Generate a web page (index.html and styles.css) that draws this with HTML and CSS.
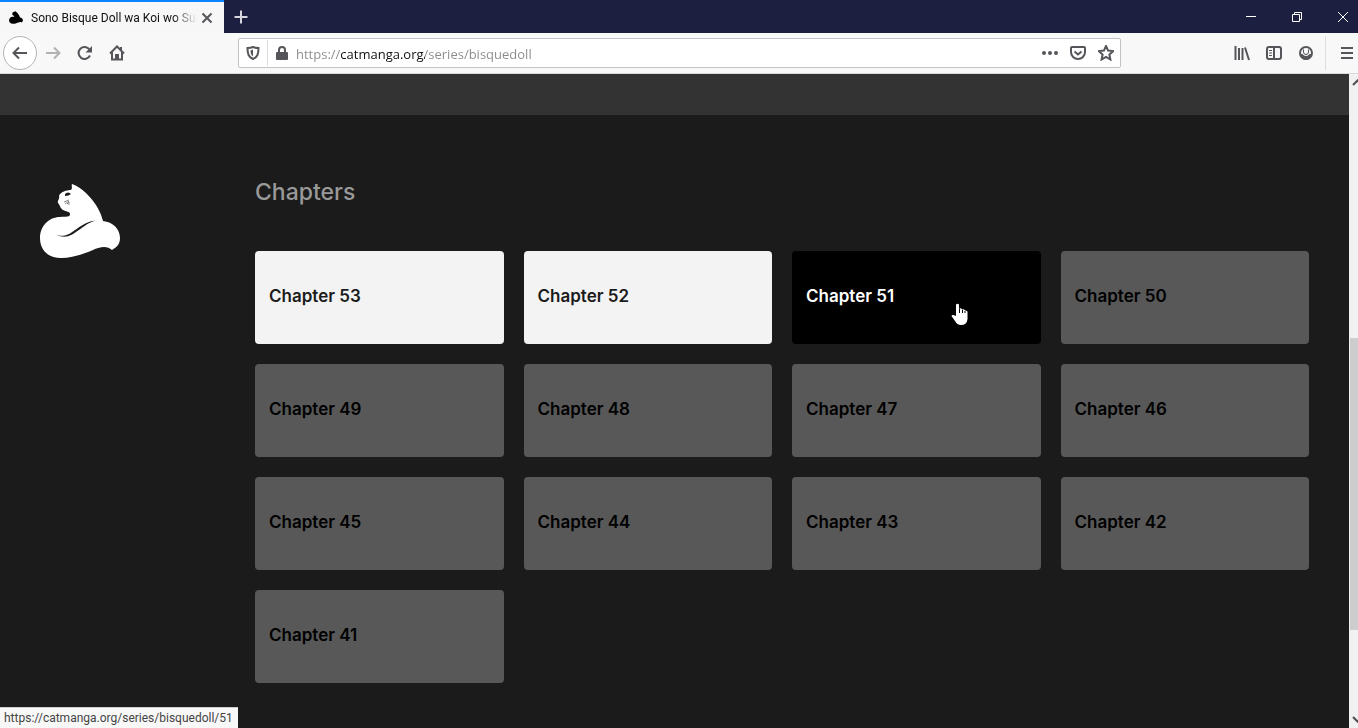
FILE: index.html
```html
<!DOCTYPE html>
<html lang="en">
<head>
<meta charset="utf-8">
<title>Sono Bisque Doll wa Koi wo Suru</title>
<link rel="stylesheet" href="styles.css">
</head>
<body>
<svg class="symbols" aria-hidden="true">
  <symbol id="cat" viewBox="0 0 80 75"><path d="M32 0C42 3 59 19 63 37C73 38 80 45 80 54C80 60 77 63 72 66C67 61 59 63 53 66C43 70 33 74 21 74C8 74 0 66 0 54C0 42 9 33 20 33C25 32 30 34 30 30C30 27 26 28 23 26C20 24 20 21 18 19C17 17 20 15 19 12C20 8 27 6 31 6C33 4 31 2 32 0Z"/></symbol>
</svg>
<div class="browser">
  <header class="titlebar">
    <div class="tab">
      <svg class="favicon" viewBox="0 0 80 75"><use href="#cat"/></svg>
      <span class="tab-title">Sono Bisque Doll wa Koi wo Suru</span>
      <button class="tab-close" aria-label="Close tab"><svg width="12" height="12" viewBox="0 0 12 12"><path d="M1.500 1.500l9 9M10.500 1.500l-9 9"/></svg></button>
    </div>
    <button class="new-tab" aria-label="New tab"><svg width="16" height="16" viewBox="0 0 16 16"><path d="M8 1.500v13M1.500 8h13"/></svg></button>
    <div class="window-controls">
      <button aria-label="Minimize"><svg width="12" height="12" viewBox="0 0 12 12"><path d="M1 5.500h10"/></svg></button>
      <button aria-label="Restore"><svg width="12" height="12" viewBox="0 0 12 12"><path d="M1.500 3.500h7v7h-7zM3.500 3.500v-2h7v7h-2"/></svg></button>
      <button aria-label="Close"><svg width="12" height="12" viewBox="0 0 12 12"><path d="M1 1l10 10M11 1L1 11"/></svg></button>
    </div>
  </header>
  <nav class="toolbar" aria-label="Browser toolbar">
    <div class="nav-buttons">
      <button class="back" aria-label="Back"><svg class="icon" viewBox="0 0 16 16"><path d="M15 8H1.500M7 2.500L1.500 8 7 13.500"/></svg></button>
      <button class="forward" aria-label="Forward"><svg class="icon" viewBox="0 0 16 16"><path d="M1 8h13.500M9 2.500L14.500 8 9 13.500"/></svg></button>
      <button aria-label="Reload"><svg class="icon" viewBox="0 0 16 16"><path d="M13 10.500A6 6 0 1 1 12.500 4.500"/><path class="solid" d="M15 1v6.500H8.500z"/></svg></button>
      <button aria-label="Home"><svg class="icon" viewBox="0 0 16 16"><path d="M1 8.500L8 1.500l7 7M3 7v7.500h10V7"/><path class="solid" d="M6 9h4v5H6zM11 2h2v4h-2z"/></svg></button>
    </div>
    <div class="url-bar">
      <button aria-label="Tracking protection"><svg class="icon" viewBox="0 0 16 16"><path d="M8 2c2 1 4 1 5.500 1 0 6-1 9-5.500 11C3.500 12 2.500 9 2.500 3c1.500 0 3.500 0 5.500-1z"/><path class="solid" d="M8 4.500v7C6 10 5.500 8 5.500 5.500z"/></svg></button>
      <button class="lock" aria-label="Site information"><svg class="icon" viewBox="0 0 16 16"><path d="M5 8V5a3 3 0 0 1 6 0v3"/><rect class="solid" x="2" y="7" width="12" height="8" rx="1"/></svg></button>
      <input class="url" type="text" aria-label="Address" value="https://catmanga.org/series/bisquedoll">
      <button aria-label="Page actions"><svg class="icon" viewBox="0 0 16 16"><g class="solid"><circle cx="2" cy="8" r="2"/><circle cx="8" cy="8" r="2"/><circle cx="14" cy="8" r="2"/></g></svg></button>
      <button aria-label="Save to Pocket"><svg class="icon" viewBox="0 0 16 16"><path d="M2 2h12q1 0 1 1v4a7 7 0 0 1-14 0V3q0-1 1-1zM4.500 6.500L8 9.500l3.500-3"/></svg></button>
      <button aria-label="Bookmark"><svg class="icon" viewBox="0 0 16 16"><path d="M8 1l2.100 4.600 5 .5-3.700 3.400 1 5L8 12l-4.400 2.500 1-5L.9 6.100l5-.5z"/></svg></button>
    </div>
    <div class="tools">
      <button aria-label="Library"><svg class="icon" viewBox="0 0 16 16"><path d="M1.500 1v14M5 3v12M8.500 3v12M11 2.500L15 15"/></svg></button>
      <button aria-label="Sidebar"><svg class="icon" viewBox="0 0 16 16"><rect x="1" y="2" width="14" height="12" rx="2"/><path d="M8 2v12"/><path class="thin" d="M3 5.500h3M3 8h3M3 10.500h3"/></svg></button>
      <button aria-label="Account"><svg class="icon" viewBox="0 0 16 16"><circle cx="8" cy="8" r="6"/><path class="solid" d="M2 9h2.500a4 4 0 0 0 7 0H14A6 6 0 0 1 2 9z"/><path class="thin" d="M5.500 4.500v2.500a2.500 2.500 0 0 0 5 0V4.500"/></svg></button>
    </div>
    <button class="menu" aria-label="Menu"><svg class="icon" viewBox="0 0 16 16"><path d="M2 3h12M2 8h12M2 13h12"/></svg></button>
  </nav>
  <div class="viewport">
    <div class="page">
      <div class="band"></div>
      <div class="layout">
        <a class="logo" href="#" aria-label="CatManga home"><svg viewBox="0 0 80 75"><use href="#cat"/><path class="detail" d="M25 10q3-3 6 0q-2 2-6 2z"/><path class="tail" d="M16 50.500C31 57 37 38 56 36.500C39 41 32 59 16 50.500z"/><path class="whisker" d="M24 18l5-2M25 20l4-3M27 20l2-2M29 18v3"/></svg></a>
        <main>
          <h1>Chapters</h1>
          <div class="chapters">
            <a class="card fresh" href="#">Chapter 53</a>
            <a class="card fresh" href="#">Chapter 52</a>
            <a class="card active" href="#">Chapter 51<svg class="cursor" viewBox="0 0 17 23" aria-hidden="true"><path d="M5 1.500Q6.500 0 8 1.500V6Q10 4.500 11 6.500Q13 5.500 14 7.500Q16.500 7 16.500 9V16Q16 22 10 22Q6 22 4 18L.5 13Q1 11 5 13z"/><path class="gap" d="M8.500 6v4M11.500 7v3M14 8v2"/></svg></a>
            <a class="card" href="#">Chapter 50</a>
            <a class="card" href="#">Chapter 49</a>
            <a class="card" href="#">Chapter 48</a>
            <a class="card" href="#">Chapter 47</a>
            <a class="card" href="#">Chapter 46</a>
            <a class="card" href="#">Chapter 45</a>
            <a class="card" href="#">Chapter 44</a>
            <a class="card" href="#">Chapter 43</a>
            <a class="card" href="#">Chapter 42</a>
            <a class="card" href="#">Chapter 41</a>
          </div>
        </main>
      </div>
    </div>
    <div class="scrollbar" aria-hidden="true">
      <svg viewBox="0 0 17 17"><path d="M4 11l4.500-4.500L13 11"/></svg>
      <div class="track"><div class="thumb"></div></div>
      <svg viewBox="0 0 17 17"><path d="M4 6l4.500 4.500L13 6"/></svg>
    </div>
    <div class="status">https://catmanga.org/series/bisquedoll/51</div>
  </div>
</div>
</body>
</html>
```
FILE: styles.css
```css
* { box-sizing: border-box; }
body { margin: 0; font-family: Roboto, "Open Sans", sans-serif; }
button { display: flex; align-items: center; justify-content: center; flex: none; width: 32px; height: 32px; padding: 0; border: 0; background: none; color: #55555a; }
svg { display: block; fill: none; stroke: currentColor; }
.symbols { position: absolute; width: 0; height: 0; }
.icon { width: 16px; height: 16px; stroke-width: 2; }
.solid { fill: currentColor; stroke: none; }
.thin { stroke-width: 1; }

.browser { display: flex; flex-direction: column; height: 100vh; min-height: 480px; overflow: hidden; }

.titlebar { display: flex; flex: none; height: 33px; background: #1d1f40; }
.tab { display: flex; align-items: center; width: 224px; padding: 0 7px 0 9px; border-top: 2px solid #0a84ff; background: #f7f7f8; }
.favicon { width: 14px; height: 13px; margin-right: 8px; fill: #000; stroke: none; }
.tab-title { flex: 1; overflow: hidden; white-space: nowrap; font-size: 12px; line-height: 20px; color: #111; mask-image: linear-gradient(to right, #000 142px, transparent 166px); }
.tab-close { width: 20px; height: 24px; stroke-width: 2; }
.new-tab { width: 34px; height: 33px; color: #d6d6de; stroke-width: 2; }
.window-controls { display: flex; gap: 14px; margin-left: auto; }
.window-controls button { height: 33px; color: #fff; }
.window-controls button:last-child { margin-right: -1px; }

.toolbar { display: flex; align-items: center; flex: none; height: 41px; border-bottom: 1px solid #d9d9dc; background: #f8f8f9; }
.nav-buttons { display: flex; align-items: center; width: 238px; padding-left: 3px; }
.back { width: 34px; height: 34px; border: 1px solid #b4b4b6; border-radius: 50%; background: #fff; }
.forward { color: #b2b2b5; }
.url-bar { display: flex; align-items: center; flex: 1; height: 30px; border: 1px solid #c3c3c5; border-radius: 2px; background: #fff; }
.url-bar button { width: 28px; height: 26px; }
.url-bar .lock { width: 29px; border-left: 1px solid #ddd; }
.url { flex: 1; min-width: 0; height: 28px; padding: 2px 0 0; border: 0; outline: 0; font: 13px/24px "Open Sans", sans-serif; color: transparent; background: linear-gradient(to right, #8a8a8e 44px, #111 44px, #111 129px, #8a8a8e 129px); background-clip: text; -webkit-background-clip: text; }
.tools { display: flex; margin-left: 105px; padding-right: 3px; }
.menu { width: 33px; height: 34px; justify-content: flex-end; padding-right: 3px; border-left: 1px solid #ddd; }

.viewport { position: relative; display: flex; flex: 1; min-height: 0; }
.page { flex: 1; overflow: hidden; background: #1b1b1b; font-family: Inter, "Liberation Sans", sans-serif; }
.band { height: 41px; background: #333; }
.layout { display: grid; grid-template-columns: 80px 1fr; column-gap: 135px; padding: 62px 40px 40px; }
.logo { color: #fff; padding-top: 7px; }
.logo svg { width: 80px; height: 75px; fill: currentColor; stroke: none; }
.logo .detail, .logo .tail { fill: #1b1b1b; }
.logo .whisker { fill: none; stroke: #888; stroke-width: 1; }
h1 { margin: 0 0 44px; font-size: 23px; line-height: 30px; font-weight: 500; color: #999; }
.chapters { display: grid; grid-template-columns: repeat(4, 1fr); gap: 20px; }
.card { position: relative; display: block; height: 93px; padding: 33px 14px; border-radius: 4px; background: #585858; color: #000; font-size: 17px; line-height: 24px; font-weight: 600; text-decoration: none; }
.fresh { background: #f3f3f3; color: #1b1b1b; }
.active { background: #000; color: #fff; }
.cursor { position: absolute; left: 159px; top: 52px; width: 17px; height: 23px; fill: #fff; stroke: none; }
.cursor .gap { stroke: #000; stroke-width: 1; }

.scrollbar { display: flex; flex-direction: column; flex: none; width: 9px; overflow: hidden; background: #f1f1f1; color: #505050; }
.scrollbar svg { flex: none; width: 17px; height: 17px; stroke-width: 2; }
.track { display: flex; flex-direction: column; flex: 1; }
.track::before { content: ""; flex: 247; }
.track::after { content: ""; flex: 81; }
.thumb { flex: 292; margin-left: 1px; background: #cdcdcd; }
.status { position: absolute; left: 0; bottom: 0; height: 21px; padding: 0 5px 0 4px; border-top: 1px solid #ccc; background: #f8f8f8; color: #444; font-size: 12px; line-height: 21px; }
```
